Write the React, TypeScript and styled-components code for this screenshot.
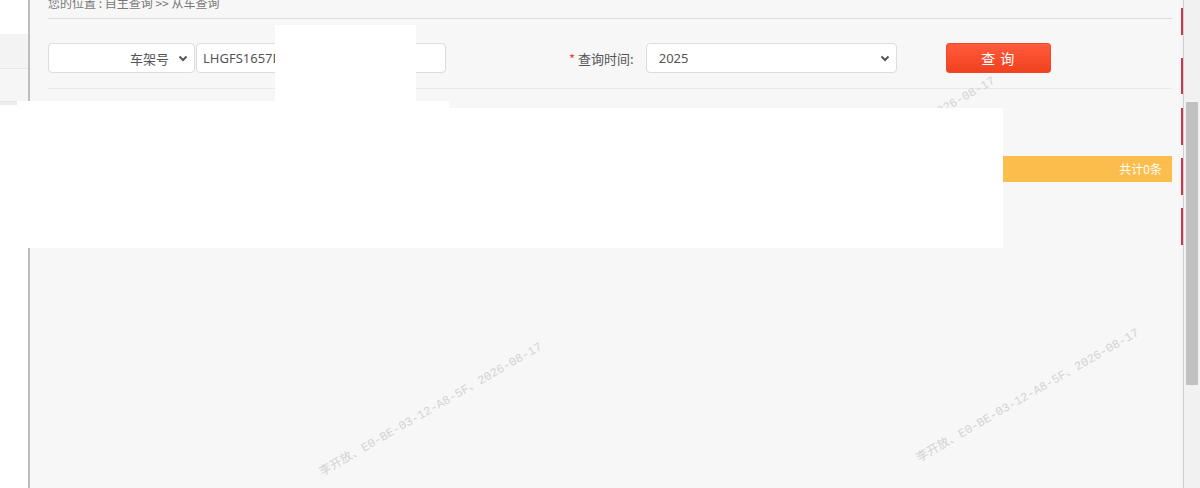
import React from 'react';
import styled, { createGlobalStyle } from 'styled-components';

const GlobalStyle = createGlobalStyle`
  html, body, #root {
    height: 100%;
    margin: 0;
  }
  body {
    overflow: hidden;
    background: #fff;
    font-family: "Noto Sans", "Noto Sans CJK SC", sans-serif;
  }
`;

const Page = styled.div`
  position: relative;
  display: flex;
  height: 100%;
`;

const Sidebar = styled.aside`
  width: 28px;
  flex-shrink: 0;
  background: #fff;
  border-right: 2px solid #bdbdbd;
`;

const SideItem = styled.div<{ $bg: string; $h: number; $line?: boolean }>`
  height: ${(p) => p.$h}px;
  background: ${(p) => p.$bg};
  border-bottom: ${(p) => (p.$line ? '1px solid #e6e6e6' : 'none')};
`;

const Main = styled.main`
  flex: 1;
  background: #f7f7f7;
  padding: 0 9px 0 18px;
`;

const Breadcrumb = styled.div`
  height: 18px;
  border-bottom: 1px solid #dcdcdc;
  font-size: 12px;
  line-height: 5px;
  color: #777;
  font-family: "Noto Sans CJK SC", sans-serif;
`;

const SearchRow = styled.div`
  display: flex;
  align-items: center;
  padding: 24px 0 15px;
  border-bottom: 1px solid #e9e9e9;
`;

const Field = styled.div<{ $w: number; $justify?: string; $pl?: number }>`
  box-sizing: border-box;
  width: ${(p) => p.$w}px;
  height: 30px;
  display: flex;
  align-items: center;
  justify-content: ${(p) => p.$justify || 'space-between'};
  gap: 9px;
  padding: 0 6px 0 ${(p) => p.$pl ?? 12}px;
  background: #fff;
  border: 1px solid #dcdcdc;
  border-radius: 4px;
  font-size: 13px;
  color: #555;
  white-space: nowrap;
  overflow: hidden;
`;

const FieldGroup = styled.div`
  display: flex;
  gap: 1px;
`;

const SelectText = styled.span`
  font-family: "Noto Sans CJK SC", sans-serif;
`;

const Label = styled.label`
  margin: 0 12px 0 123px;
  font-size: 13px;
  color: #555;
  font-family: "Noto Sans CJK SC", sans-serif;
  white-space: nowrap;
`;

const Star = styled.span`
  color: #e8443a;
  margin-right: 3px;
`;

const SearchButton = styled.button`
  margin-left: 49px;
  width: 105px;
  height: 30px;
  border: 1px solid #ee4a2a;
  border-radius: 3px;
  background: linear-gradient(#ff5c3d, #f2411f);
  color: #fff;
  font-size: 14px;
  font-family: "Noto Sans CJK SC", sans-serif;
  letter-spacing: 1px;
  cursor: pointer;
`;

const ResultBar = styled.div`
  margin-top: 67px;
  height: 26px;
  background: #fbbd4b;
  color: #fff;
  font-size: 12px;
  font-family: "Noto Sans CJK SC", sans-serif;
  line-height: 26px;
  text-align: right;
  padding-right: 10px;
`;

const DashRail = styled.div`
  width: 2px;
  flex-shrink: 0;
  background: #f3f3f3;
`;

const Divider = styled.div`
  width: 1px;
  flex-shrink: 0;
  background: #cfcfcf;
`;

const Scrollbar = styled.div`
  width: 16px;
  flex-shrink: 0;
  background: #f1f1f1;
`;

const Thumb = styled.div`
  margin: 102px 2px 0;
  height: 283px;
  background: #c1c1c1;
`;

// diagonal user stamp repeated across the content area
const Watermark = styled.div<{ $cx: number; $cy: number }>`
  position: absolute;
  left: ${(p) => p.$cx}px;
  top: ${(p) => p.$cy}px;
  transform: translate(-50%, -50%) rotate(-30deg);
  white-space: nowrap;
  font-size: 12px;
  font-family: "Liberation Mono", "Noto Sans CJK SC", monospace;
  color: #d3d3d3;
  pointer-events: none;
`;

const Mask = styled.div<{ $x: number; $y: number; $w: number; $h: number }>`
  position: absolute;
  left: ${(p) => p.$x}px;
  top: ${(p) => p.$y}px;
  width: ${(p) => p.$w}px;
  height: ${(p) => p.$h}px;
  background: #fff;
`;

const Chevron = () => (
  <svg width="10" height="7" viewBox="0 0 10 7">
    <polyline points="1.5,1.5 5,5 8.5,1.5" fill="none" stroke="#555" strokeWidth="2" />
  </svg>
);

const dashes = [
  [8, 35],
  [58, 94],
  [108, 145],
  [158, 195],
  [208, 245],
];

const marks = [
  { cx: 286, cy: 156 },
  { cx: 883, cy: 142 },
  { cx: 430, cy: 408 },
  { cx: 1027, cy: 394 },
];

const masks = [
  { x: 275, y: 25, w: 141, h: 77 },
  { x: 17, y: 101, w: 432, h: 9 },
  { x: 0, y: 108, w: 1003, h: 140 },
];

const App = () => {
  return (
    <>
      <GlobalStyle />
      <Page>
        <Sidebar>
          <SideItem $bg="#fff" $h={34} />
          <SideItem $bg="#f3f3f3" $h={34} $line />
          <SideItem $bg="#f6f6f6" $h={32} $line />
          <SideItem $bg="#ececec" $h={3} />
        </Sidebar>

        <Main>
          <Breadcrumb>您的位置 : 自主查询 &gt;&gt; 从车查询</Breadcrumb>
          <SearchRow>
            <FieldGroup>
              <Field $w={147} $justify="flex-end">
                <SelectText>车架号</SelectText>
                <Chevron />
              </Field>
              <Field $w={250} $justify="flex-start" $pl={6}>
                LHGFS1657D8012345
              </Field>
            </FieldGroup>
            <Label>
              <Star>*</Star>查询时间:
            </Label>
            <Field $w={251}>
              2025
              <Chevron />
            </Field>
            <SearchButton>查 询</SearchButton>
          </SearchRow>
          <ResultBar>共计0条</ResultBar>
        </Main>

        <DashRail>
          <svg width="2" height="488">
            {dashes.map(([a, b]) => (
              <rect key={a} x="0" y={a} width="2" height={b - a} fill="#c8374e" />
            ))}
          </svg>
        </DashRail>
        <Divider />
        <Scrollbar>
          <Thumb />
        </Scrollbar>

        {marks.map((m, i) => (
          <Watermark key={i} $cx={m.cx} $cy={m.cy}>
            李开放、E0-BE-03-12-A8-5F、2026-08-17
          </Watermark>
        ))}
        {masks.map((m, i) => (
          <Mask key={i} $x={m.x} $y={m.y} $w={m.w} $h={m.h} />
        ))}
      </Page>
    </>
  );
};

export default App;
